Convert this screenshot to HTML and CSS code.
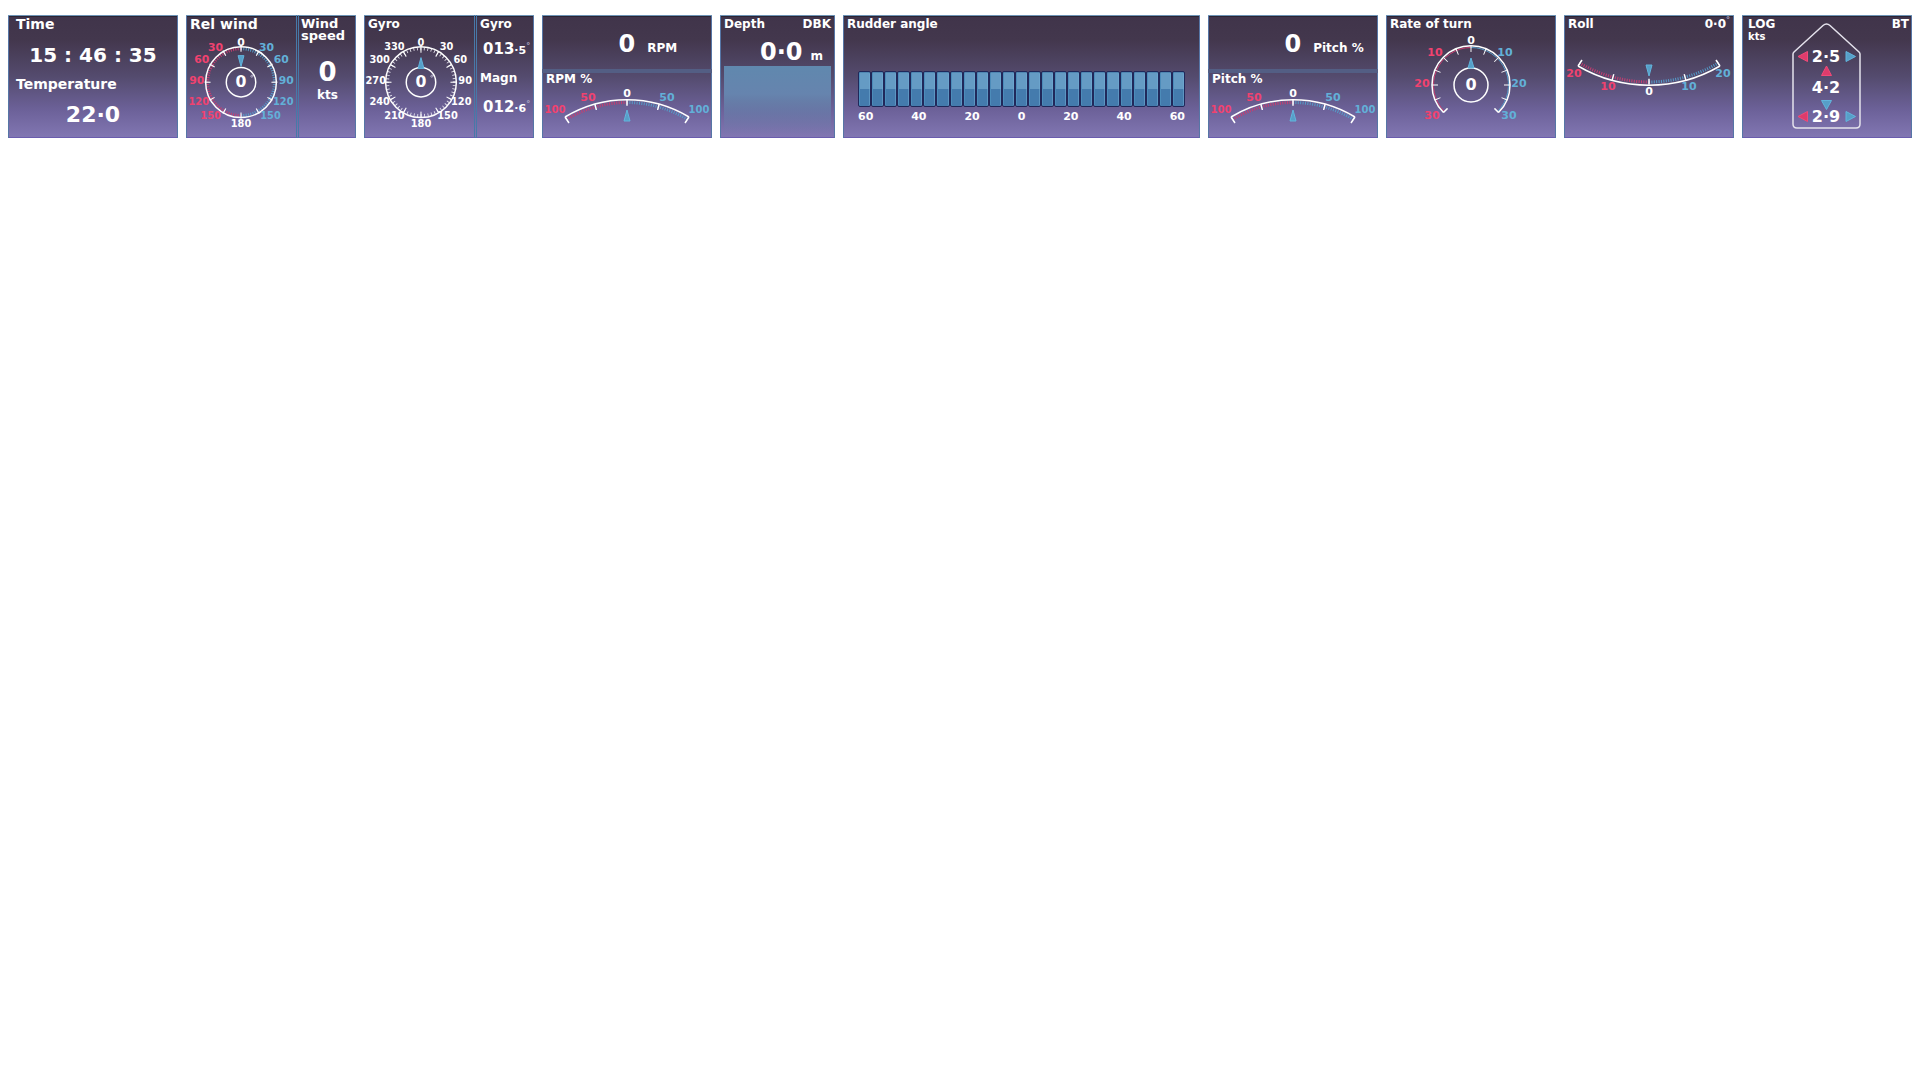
FILE: index.html
```html
<!DOCTYPE html>
<html lang="en">
<head>
<meta charset="utf-8">
<meta name="viewport" content="width=device-width, initial-scale=1">
<title>Conning display</title>
<link rel="stylesheet" href="styles.css">
</head>
<body>
<main class="strip">

  <section class="panel clock">
    <h2 class="title large">Time</h2>
    <p class="reading time">15 : 46 : 35</p>
    <h2 class="title large">Temperature</h2>
    <p class="reading temp">22·0</p>
  </section>

  <section class="panel split">
    <div class="main">
      <h2 class="title large">Rel wind</h2>
      <svg viewBox="-1 0 112 103" role="img" aria-label="Relative wind 0 degrees">
        <path class="minor red" d="M55 82A34 34 0 0 1 55 14"/>
        <path class="minor blue" d="M55 14A34 34 0 0 1 55 82"/>
        <circle class="major" cx="55" cy="48" r="34" pathLength="360" stroke-dasharray="2 28" stroke-dashoffset="1"/>
        <circle class="ring" cx="55" cy="48" r="36"/>
        <circle class="ring" cx="55" cy="48" r="15"/>
        <path class="pointer" d="M52 21h6l-3 11z"/>
        <text class="mid" x="55" y="53">0</text>
        <circle class="degree" cx="66" cy="42" r="1"/>
        <text x="55" y="11">0</text>
        <g class="port">
          <text x="29" y="16">30</text><text x="15" y="29">60</text><text x="10" y="50">90</text>
          <text class="three" x="12" y="71">120</text><text class="three" x="24" y="85">150</text>
        </g>
        <g class="starboard">
          <text x="81" y="16">30</text><text x="96" y="29">60</text><text x="101" y="50">90</text>
          <text class="three" x="98" y="71">120</text><text class="three" x="85" y="85">150</text>
        </g>
        <text class="three" x="55" y="94">180</text>
      </svg>
    </div>
    <div class="side">
      <h2 class="title stacked">Wind<br>speed</h2>
      <p class="speed">0</p>
      <p class="speed-unit">kts</p>
    </div>
  </section>

  <section class="panel split">
    <div class="main">
      <h2 class="title">Gyro</h2>
      <svg viewBox="-1 0 112 103" role="img" aria-label="Gyro heading 0 degrees">
        <circle class="minor white" cx="57" cy="48" r="34" pathLength="360"/>
        <circle class="major" cx="57" cy="48" r="33" pathLength="360" stroke-dasharray="2 28" stroke-dashoffset="1"/>
        <circle class="ring" cx="57" cy="48" r="36"/>
        <circle class="ring" cx="57" cy="48" r="15"/>
        <path class="pointer" d="M54 34h6l-3 -11z"/>
        <text class="mid" x="57" y="53">0</text>
        <circle class="degree" cx="68" cy="42" r="1"/>
        <g class="fine">
          <text x="57" y="11">0</text>
          <text x="83" y="15">30</text><text x="97" y="29">60</text><text x="102" y="50">90</text>
          <text x="98" y="71">120</text><text x="84" y="85">150</text><text x="57" y="94">180</text>
          <text x="30" y="85">210</text><text x="15" y="71">240</text><text x="11" y="50">270</text>
          <text x="15" y="29">300</text><text x="30" y="15">330</text>
        </g>
      </svg>
    </div>
    <div class="side headings">
      <h2 class="title">Gyro</h2>
      <p class="heading">013<small>·5<sup>°</sup></small></p>
      <h2 class="title">Magn</h2>
      <p class="heading">012<small>·6<sup>°</sup></small></p>
    </div>
  </section>

  <section class="panel">
    <p class="output"><b>0</b><span>RPM</span></p>
    <h2 class="title gauge-title">RPM %</h2>
    <svg viewBox="0 0 170 51" role="img" aria-label="RPM 0 percent">
      <path class="minor red" d="M24.5 32.5A117 117 0 0 1 85 15.500"/>
      <path class="minor blue" d="M85 15.500A117 117 0 0 1 145.500 32.500"/>
      <path class="major" d="M24.5 32.5A117 117 0 0 1 145.500 32.500" pathLength="100" stroke-dasharray="1.200 23.800" stroke-dashoffset="0.6"/>
      <path class="ring" d="M23 30A120 120 0 0 1 147 30M23 30l4 6M147 30l-4 6"/>
      <path class="pointer" d="M82 34h6l-3 -11z"/>
      <text x="85" y="10">0</text>
      <g class="port"><text class="three" x="13" y="26">100</text><text x="46" y="14">50</text></g>
      <g class="starboard"><text x="125" y="14">50</text><text class="three" x="157" y="26">100</text></g>
    </svg>
  </section>

  <section class="panel depth">
    <header class="bar"><h2 class="title">Depth</h2><span class="title">DBK</span></header>
    <p class="depth-value"><b>0·0</b><span>m</span></p>
    <div class="water"></div>
  </section>

  <section class="panel rudder">
    <h2 class="title">Rudder angle</h2>
    <div class="cells">
      <i></i><i></i><i></i><i></i><i></i><i></i><i></i><i></i><i></i><i></i><i></i><i></i><i></i><i></i><i></i><i></i><i></i><i></i><i></i><i></i><i></i><i></i><i></i><i></i><i></i>
    </div>
    <div class="scale"><span>60</span><span>40</span><span>20</span><span>0</span><span>20</span><span>40</span><span>60</span></div>
  </section>

  <section class="panel">
    <p class="output"><b>0</b><span>Pitch %</span></p>
    <h2 class="title gauge-title">Pitch %</h2>
    <svg viewBox="0 0 170 51" role="img" aria-label="Pitch 0 percent">
      <path class="minor red" d="M24.5 32.5A117 117 0 0 1 85 15.500"/>
      <path class="minor blue" d="M85 15.500A117 117 0 0 1 145.500 32.500"/>
      <path class="major" d="M24.5 32.5A117 117 0 0 1 145.500 32.500" pathLength="100" stroke-dasharray="1.200 23.800" stroke-dashoffset="0.6"/>
      <path class="ring" d="M23 30A120 120 0 0 1 147 30M23 30l4 6M147 30l-4 6"/>
      <path class="pointer" d="M82 34h6l-3 -11z"/>
      <text x="85" y="10">0</text>
      <g class="port"><text class="three" x="13" y="26">100</text><text x="46" y="14">50</text></g>
      <g class="starboard"><text x="125" y="14">50</text><text class="three" x="157" y="26">100</text></g>
    </svg>
  </section>

  <section class="panel">
    <h2 class="title">Rate of turn</h2>
    <svg viewBox="0 0 170 103" role="img" aria-label="Rate of turn 0">
      <path class="hint red" d="M58.500 76.500A37.500 37.500 0 0 1 85 12.500"/>
      <path class="hint blue" d="M85 12.500A37.500 37.500 0 0 1 111.500 76.500"/>
      <path class="major" d="M59.500 75.500A36 36 0 1 1 110.500 75.500" pathLength="270" stroke-dasharray="1.600 20.900" stroke-dashoffset="0.8"/>
      <path class="ring" d="M57.500 77.500A39 39 0 1 1 112.500 77.500M57.500 77.500l4 -4M112.500 77.500l-4 -4"/>
      <circle class="ring" cx="85" cy="50" r="17"/>
      <path class="pointer" d="M82 33h6l-3 -10z"/>
      <text class="mid" x="85" y="55">0</text>
      <text x="85" y="9">0</text>
      <g class="port"><text x="49" y="21">10</text><text x="36" y="52">20</text><text x="46" y="84">30</text></g>
      <g class="starboard"><text x="119" y="21">10</text><text x="133" y="52">20</text><text x="123" y="84">30</text></g>
    </svg>
  </section>

  <section class="panel">
    <header class="bar"><h2 class="title">Roll</h2><span class="title">0·0<sup>°</sup></span></header>
    <svg viewBox="0 0 170 103" role="img" aria-label="Roll 0 degrees">
      <path class="minor red" d="M15.500 28A138 138 0 0 0 85 47"/>
      <path class="minor blue" d="M85 47A138 138 0 0 0 154.500 28"/>
      <path class="major" d="M15.500 28A138 138 0 0 0 154.500 28" pathLength="100" stroke-dasharray="1 24" stroke-dashoffset="0.5"/>
      <path class="ring" d="M14 31A141 141 0 0 0 156 31M14 31l4 -6M156 31l-4 -6"/>
      <path class="pointer" d="M82 30h6l-3 11z"/>
      <text x="85" y="60">0</text>
      <g class="port"><text x="10" y="42">20</text><text x="44" y="55">10</text></g>
      <g class="starboard"><text x="125" y="55">10</text><text x="159" y="42">20</text></g>
    </svg>
  </section>

  <section class="panel log">
    <header class="bar"><h2 class="title">LOG<small>kts</small></h2><span class="title">BT</span></header>
    <svg viewBox="0 0 170 123" role="img" aria-label="Speed log">
      <path class="hull" d="M51 39Q51 38 52 37L81 10.500Q84.500 7.500 88 10.500L117 37Q118 38 118 39V109Q118 113 114 113H55Q51 113 51 109Z"/>
      <path class="port-arrow" d="M56 41.500l9.500 -5v10zM84.500 51l5 9.500h-10zM56 101.500l9.500 -5v10z"/>
      <path class="starboard-arrow" d="M113.500 41.500l-9.500 -5v10zM84.500 94.500l-5 -9h10zM113.500 101.500l-9.500 -5v10z"/>
      <text class="mid" x="84" y="47">2·5</text>
      <text class="mid" x="84" y="78">4·2</text>
      <text class="mid" x="84" y="107">2·9</text>
    </svg>
  </section>

</main>
</body>
</html>
```
FILE: styles.css
```css
* { box-sizing: border-box; }

body {
  margin: 0;
  padding: 15px 8px;
  background: #fff;
  color: #fff;
  font: bold 12px/18px "DejaVu Sans", sans-serif;
}

h2, p { margin: 0; font-size: inherit; }

sup { font-size: 8px; line-height: 0; color: #b9b3cc; }

.strip {
  display: grid;
  grid-template-columns: 170fr 170fr 170fr 170fr 115fr 357fr 170fr 170fr 170fr 170fr;
  gap: 8px;
}

.panel {
  min-width: 0;
  min-height: 123px;
  display: flex;
  flex-direction: column;
  overflow: hidden;
  white-space: nowrap;
  background: linear-gradient(#40344a, #43374d 20%, #544b6e 50%, #6d629a 78%, #8277b3);
  box-shadow: inset 0 1px #6d93b5, inset 1px 0 #5676a6, inset -1px 0 #5676a6, inset 0 -1px #6a5cae, inset 0 2px #2b2434;
}

svg { display: block; width: 100%; height: auto; }

.title { min-height: 20px; padding: 0 4px; font-weight: bold; }
.title.large { font-size: 14px; }

.bar { display: flex; justify-content: space-between; }

/* Time and temperature */
.clock .title { height: 18px; min-height: 0; padding: 0 8px; }
.clock .reading { margin-top: 2px; }
.reading { line-height: 40px; text-align: center; }
.time { font-size: 20px; }
.temp { font-size: 22px; }

/* Dial with a side column */
.split { flex-direction: row; }
.main { flex: 112; min-width: 0; }
.side { flex: 58; min-width: 0; border-left: 3px double #4779a8; }
.title.stacked { padding: 3px 2px 0; font-size: 13px; line-height: 12px; }
.speed { margin-top: 15px; font-size: 26px; line-height: 31px; text-align: center; }
.speed-unit { font-size: 12px; line-height: 14px; text-align: center; }
.headings .title { padding: 0 3px; }
.heading { padding-left: 6px; font-size: 15px; line-height: 28px; }
.heading small { font-size: 11px; }
.heading + .title { padding-top: 4px; min-height: 28px; }

/* Numeric output above an arc gauge */
.output {
  display: flex;
  align-items: baseline;
  gap: 12px;
  height: 58px;
  padding: 4px 0 0 45%;
  line-height: 50px;
  border-bottom: 4px solid #535e84;
}
.output b { font-size: 24px; }
.gauge-title { min-height: 14px; line-height: 13px; }

/* Depth */
.depth .bar { height: 20px; }
.depth-value {
  display: flex;
  align-items: baseline;
  justify-content: flex-end;
  gap: 8px;
  height: 31px;
  padding: 2px 12px 0 0;
  line-height: 30px;
}
.depth-value b { font-size: 24px; }
.water {
  flex: 1;
  margin: 0 4px 2px;
  background: linear-gradient(#6088ae, #6684ae 40%, #8277b300);
}

/* Rudder */
.cells { display: flex; margin: 36px 15px 0; }
.cells i {
  flex: 1;
  height: 36px;
  border: 1px solid #20285a;
  border-radius: 2px;
  background: linear-gradient(#659bc4 50%, #447bad 50%);
  box-shadow: inset 0 1px #4f87b2, inset -1px 0 #74b0d680, inset 1px 0 #4c8cba;
}
.scale { display: flex; justify-content: space-between; margin: 1px 15px 0; font-size: 11px; line-height: 18px; }

/* Gauge drawing */
text { fill: #fff; font-size: 11px; text-anchor: middle; }
.three, .fine text { font-size: 10px; }
text.mid { font-size: 16px; }
.port text { fill: #f0426f; }
.starboard text { fill: #62b0d8; }
.ring, .major, .minor, .hint, .hull, .degree { fill: none; }
.ring { stroke: #fff; stroke-width: 1.5px; }
.major { stroke: #fff; stroke-width: 6px; }
.minor { stroke-width: 3px; stroke-dasharray: 1 1.4; }
.hint { stroke-width: 1px; }
.red { stroke: #c93d70; }
.blue { stroke: #559cc9; }
.white { stroke: #e4e2ec; stroke-dasharray: 1.5 4.5; stroke-dashoffset: 1; }
.degree { stroke: #b9b3cc; stroke-width: 1px; }
.pointer, .starboard-arrow { fill: #579fc8; stroke: #62b5dd; stroke-width: 1px; }
.port-arrow { fill: #dd3c6c; stroke: #f04a78; stroke-width: 1px; }

/* Speed log: the hull outline shares the header's space */
.log { display: grid; }
.log .bar, .log svg { grid-area: 1 / 1; }
.log .title { padding: 0 3px 0 6px; }
.log small { display: block; font-size: 10px; line-height: 8px; }
.hull { stroke: #e4e2ec; stroke-width: 1.5px; }
```
